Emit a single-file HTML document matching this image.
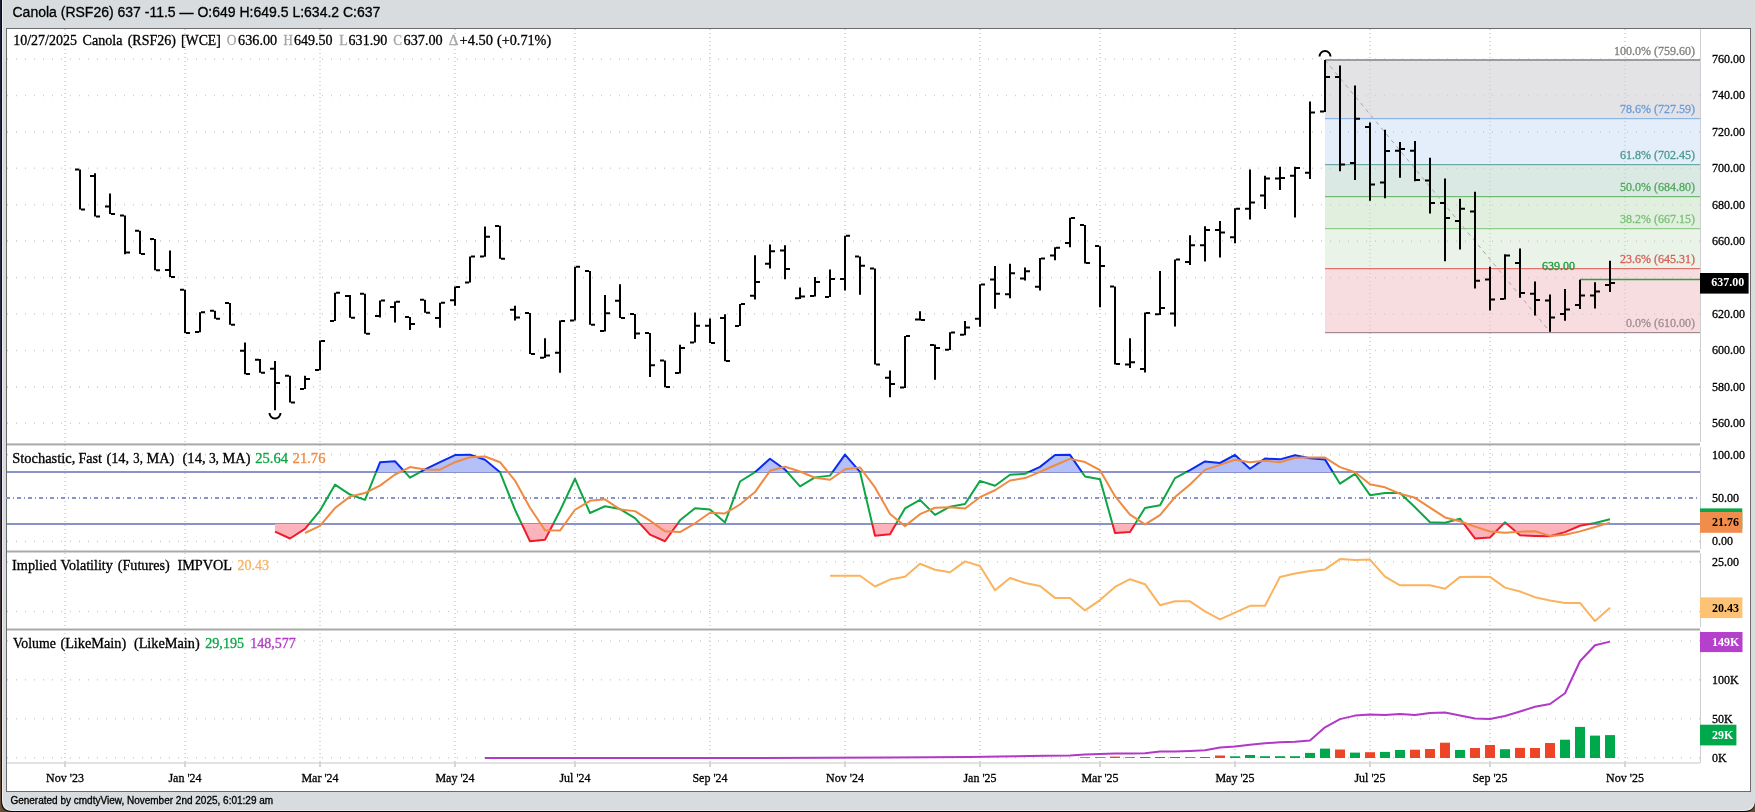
<!DOCTYPE html>
<html><head><meta charset="utf-8"><style>
html,body{margin:0;padding:0;width:1755px;height:812px;overflow:hidden;background:#5e4a33;}
svg{display:block;font-family:"Liberation Serif",serif;will-change:transform;}
</style></head><body>
<svg width="1755" height="812" viewBox="0 0 1755 812" shape-rendering="auto">
<rect x="0" y="0" width="1755" height="812" fill="#5e4a33"/>
<path d="M1 0 H1755 V801 Q1755 812 1744 812 H12 Q1 812 1 801 Z" fill="#050505"/>
<path d="M2 0 H1755 V800 Q1755 811 1744 811 H12 Q2 811 2 800 Z" fill="#eceef0"/>
<path d="M3 0 H1755 V799 Q1754 810 1743 810 H12 Q3 810 3 799 Z" fill="#d9dcdf"/>
<defs><linearGradient id="edge" x1="0" y1="0" x2="0" y2="1"><stop offset="0" stop-color="#1e2038"/><stop offset="0.48" stop-color="#34304a"/><stop offset="0.87" stop-color="#4e3e38"/><stop offset="1" stop-color="#6a5035"/></linearGradient></defs>
<rect x="0" y="0" width="1.2" height="812" fill="url(#edge)"/>
<text x="12.5" y="17" font-family="Liberation Sans" font-size="14" fill="#000" stroke="#000" stroke-width="0.3">Canola (RSF26) 637 -11.5 — O:649 H:649.5 L:634.2 C:637</text>
<rect x="6.5" y="28.5" width="1744" height="763" fill="#fff" stroke="#6b6b6b" stroke-width="1"/>
<rect x="1325" y="59.73" width="375" height="58.31" fill="#e3e3e5"/>
<rect x="1325" y="118.03" width="375" height="45.79" fill="#e3eefa"/>
<rect x="1325" y="163.83" width="375" height="32.15" fill="#dbe9e5"/>
<rect x="1325" y="195.98" width="375" height="32.15" fill="#e1efdf"/>
<rect x="1325" y="228.13" width="375" height="39.78" fill="#e9f3e7"/>
<rect x="1325" y="267.91" width="375" height="64.32" fill="#f8dde0"/>
<line x1="7" y1="423.30" x2="1700" y2="423.30" stroke="#d0d0d0" stroke-width="1.6" stroke-dasharray="1 8" stroke-dashoffset="0"/>
<line x1="7" y1="386.87" x2="1700" y2="386.87" stroke="#d0d0d0" stroke-width="1.6" stroke-dasharray="1 8" stroke-dashoffset="0"/>
<line x1="7" y1="350.44" x2="1700" y2="350.44" stroke="#d0d0d0" stroke-width="1.6" stroke-dasharray="1 8" stroke-dashoffset="0"/>
<line x1="7" y1="314.01" x2="1700" y2="314.01" stroke="#d0d0d0" stroke-width="1.6" stroke-dasharray="1 8" stroke-dashoffset="0"/>
<line x1="7" y1="277.58" x2="1700" y2="277.58" stroke="#d0d0d0" stroke-width="1.6" stroke-dasharray="1 8" stroke-dashoffset="0"/>
<line x1="7" y1="241.15" x2="1700" y2="241.15" stroke="#d0d0d0" stroke-width="1.6" stroke-dasharray="1 8" stroke-dashoffset="0"/>
<line x1="7" y1="204.72" x2="1700" y2="204.72" stroke="#d0d0d0" stroke-width="1.6" stroke-dasharray="1 8" stroke-dashoffset="0"/>
<line x1="7" y1="168.29" x2="1700" y2="168.29" stroke="#d0d0d0" stroke-width="1.6" stroke-dasharray="1 8" stroke-dashoffset="0"/>
<line x1="7" y1="131.86" x2="1700" y2="131.86" stroke="#d0d0d0" stroke-width="1.6" stroke-dasharray="1 8" stroke-dashoffset="0"/>
<line x1="7" y1="95.43" x2="1700" y2="95.43" stroke="#d0d0d0" stroke-width="1.6" stroke-dasharray="1 8" stroke-dashoffset="0"/>
<line x1="7" y1="59.00" x2="1700" y2="59.00" stroke="#d0d0d0" stroke-width="1.6" stroke-dasharray="1 8" stroke-dashoffset="0"/>
<line x1="7" y1="454.66" x2="1700" y2="454.66" stroke="#d0d0d0" stroke-width="1.6" stroke-dasharray="1 8" stroke-dashoffset="0"/>
<line x1="7" y1="541.33" x2="1700" y2="541.33" stroke="#d0d0d0" stroke-width="1.6" stroke-dasharray="1 8" stroke-dashoffset="0"/>
<line x1="7" y1="562.00" x2="1700" y2="562.00" stroke="#d0d0d0" stroke-width="1.6" stroke-dasharray="1 8" stroke-dashoffset="0"/>
<line x1="7" y1="611.50" x2="1700" y2="611.50" stroke="#d0d0d0" stroke-width="1.6" stroke-dasharray="1 8" stroke-dashoffset="0"/>
<line x1="7" y1="641.00" x2="1700" y2="641.00" stroke="#d0d0d0" stroke-width="1.6" stroke-dasharray="1 8" stroke-dashoffset="0"/>
<line x1="7" y1="679.80" x2="1700" y2="679.80" stroke="#d0d0d0" stroke-width="1.6" stroke-dasharray="1 8" stroke-dashoffset="0"/>
<line x1="7" y1="718.80" x2="1700" y2="718.80" stroke="#d0d0d0" stroke-width="1.6" stroke-dasharray="1 8" stroke-dashoffset="0"/>
<line x1="7" y1="757.80" x2="1700" y2="757.80" stroke="#d0d0d0" stroke-width="1.6" stroke-dasharray="1 8" stroke-dashoffset="0"/>
<line x1="65" y1="29" x2="65" y2="763" stroke="#d0d0d0" stroke-width="1.6" stroke-dasharray="1 3"/>
<line x1="185" y1="29" x2="185" y2="763" stroke="#d0d0d0" stroke-width="1.6" stroke-dasharray="1 3"/>
<line x1="320" y1="29" x2="320" y2="763" stroke="#d0d0d0" stroke-width="1.6" stroke-dasharray="1 3"/>
<line x1="455" y1="29" x2="455" y2="763" stroke="#d0d0d0" stroke-width="1.6" stroke-dasharray="1 3"/>
<line x1="575" y1="29" x2="575" y2="763" stroke="#d0d0d0" stroke-width="1.6" stroke-dasharray="1 3"/>
<line x1="710" y1="29" x2="710" y2="763" stroke="#d0d0d0" stroke-width="1.6" stroke-dasharray="1 3"/>
<line x1="845" y1="29" x2="845" y2="763" stroke="#d0d0d0" stroke-width="1.6" stroke-dasharray="1 3"/>
<line x1="980" y1="29" x2="980" y2="763" stroke="#d0d0d0" stroke-width="1.6" stroke-dasharray="1 3"/>
<line x1="1100" y1="29" x2="1100" y2="763" stroke="#d0d0d0" stroke-width="1.6" stroke-dasharray="1 3"/>
<line x1="1235" y1="29" x2="1235" y2="763" stroke="#d0d0d0" stroke-width="1.6" stroke-dasharray="1 3"/>
<line x1="1370" y1="29" x2="1370" y2="763" stroke="#d0d0d0" stroke-width="1.6" stroke-dasharray="1 3"/>
<line x1="1490" y1="29" x2="1490" y2="763" stroke="#d0d0d0" stroke-width="1.6" stroke-dasharray="1 3"/>
<line x1="1625" y1="29" x2="1625" y2="763" stroke="#d0d0d0" stroke-width="1.6" stroke-dasharray="1 3"/>
<rect x="1325" y="59" width="375" height="2" fill="#9c9ca0"/>
<text x="1695" y="54.73" font-family="Liberation Serif" font-size="12" fill="#808080" stroke="#808080" stroke-width="0.3" text-anchor="end">100.0% (759.60)</text>
<rect x="1325" y="118" width="375" height="1.2" fill="#8cb4e6"/>
<text x="1695" y="113.03" font-family="Liberation Serif" font-size="12" fill="#6a9ddc" stroke="#6a9ddc" stroke-width="0.3" text-anchor="end">78.6% (727.59)</text>
<rect x="1325" y="164" width="375" height="1.2" fill="#6aaaa2"/>
<text x="1695" y="158.83" font-family="Liberation Serif" font-size="12" fill="#4c9a92" stroke="#4c9a92" stroke-width="0.3" text-anchor="end">61.8% (702.45)</text>
<rect x="1325" y="196" width="375" height="1.2" fill="#72b872"/>
<text x="1695" y="190.98" font-family="Liberation Serif" font-size="12" fill="#52a85c" stroke="#52a85c" stroke-width="0.3" text-anchor="end">50.0% (684.80)</text>
<rect x="1325" y="228" width="375" height="1.2" fill="#8fcb8a"/>
<text x="1695" y="223.13" font-family="Liberation Serif" font-size="12" fill="#7cc07a" stroke="#7cc07a" stroke-width="0.3" text-anchor="end">38.2% (667.15)</text>
<rect x="1325" y="268" width="375" height="1.2" fill="#e2706a"/>
<text x="1695" y="262.91" font-family="Liberation Serif" font-size="12" fill="#d8605a" stroke="#d8605a" stroke-width="0.3" text-anchor="end">23.6% (645.31)</text>
<rect x="1325" y="332" width="375" height="1.2" fill="#a28a92"/>
<text x="1695" y="327.22" font-family="Liberation Serif" font-size="12" fill="#a08c94" stroke="#a08c94" stroke-width="0.3" text-anchor="end">0.0% (610.00)</text>
<line x1="1325" y1="60" x2="1550" y2="331.8" stroke="#a8a8a8" stroke-width="1" stroke-dasharray="4 4"/>
<line x1="1580" y1="279.4" x2="1700" y2="279.4" stroke="#2aa040" stroke-width="1.5"/>
<text x="1542" y="269.8" font-family="Liberation Serif" font-size="12" fill="#1a9a3a" stroke="#1a9a3a" stroke-width="0.3">639.00</text>
<path d="M79.0 169.5h2v40.0h-2zM75.0 168.5h4v2h-4zM81.0 208.5h4v2h-4zM94.0 173.3h2v43.2h-2zM90.0 175.0h4v2h-4zM96.0 215.5h4v2h-4zM109.0 193.6h2v20.4h-2zM105.0 205.5h4v2h-4zM111.0 213.0h4v2h-4zM124.0 215.5h2v38.8h-2zM120.0 214.5h4v2h-4zM126.0 251.6h4v2h-4zM139.0 230.7h2v23.3h-2zM135.0 229.7h4v2h-4zM141.0 253.0h4v2h-4zM154.0 239.0h2v31.3h-2zM150.0 238.0h4v2h-4zM156.0 269.3h4v2h-4zM169.0 250.5h2v26.5h-2zM165.0 269.0h4v2h-4zM171.0 276.0h4v2h-4zM184.0 289.8h2v43.3h-2zM180.0 288.8h4v2h-4zM186.0 332.0h4v2h-4zM199.0 312.2h2v20.0h-2zM195.0 331.0h4v2h-4zM201.0 311.2h4v2h-4zM214.0 310.7h2v8.1h-2zM210.0 309.7h4v2h-4zM216.0 317.8h4v2h-4zM229.0 303.0h2v21.8h-2zM225.0 302.0h4v2h-4zM231.0 323.8h4v2h-4zM244.0 342.6h2v31.7h-2zM240.0 349.7h4v2h-4zM246.0 373.0h4v2h-4zM259.0 359.0h2v13.8h-2zM255.0 358.8h4v2h-4zM261.0 371.8h4v2h-4zM274.0 361.0h2v49.2h-2zM270.0 367.8h4v2h-4zM276.0 382.1h4v2h-4zM289.0 375.7h2v26.7h-2zM285.0 374.7h4v2h-4zM291.0 401.4h4v2h-4zM304.0 375.7h2v13.3h-2zM300.0 388.0h4v2h-4zM306.0 378.1h4v2h-4zM319.0 340.5h2v29.8h-2zM315.0 369.0h4v2h-4zM321.0 340.0h4v2h-4zM334.0 292.8h2v28.1h-2zM330.0 319.9h4v2h-4zM336.0 291.8h4v2h-4zM349.0 295.0h2v22.8h-2zM345.0 294.9h4v2h-4zM351.0 316.8h4v2h-4zM364.0 293.8h2v40.0h-2zM360.0 292.8h4v2h-4zM366.0 332.8h4v2h-4zM379.0 300.5h2v16.9h-2zM375.0 315.0h4v2h-4zM381.0 299.5h4v2h-4zM394.0 301.4h2v21.2h-2zM390.0 306.0h4v2h-4zM396.0 300.7h4v2h-4zM409.0 317.0h2v13.0h-2zM405.0 316.0h4v2h-4zM411.0 323.0h4v2h-4zM424.0 299.8h2v13.0h-2zM420.0 298.8h4v2h-4zM426.0 311.8h4v2h-4zM439.0 302.8h2v25.0h-2zM435.0 317.0h4v2h-4zM441.0 301.8h4v2h-4zM454.0 286.4h2v19.3h-2zM450.0 299.2h4v2h-4zM456.0 286.0h4v2h-4zM469.0 256.4h2v26.1h-2zM465.0 281.5h4v2h-4zM471.0 255.4h4v2h-4zM484.0 226.4h2v30.4h-2zM480.0 255.4h4v2h-4zM486.0 235.7h4v2h-4zM499.0 225.8h2v33.0h-2zM495.0 225.0h4v2h-4zM501.0 257.8h4v2h-4zM514.0 305.7h2v14.8h-2zM510.0 308.7h4v2h-4zM516.0 316.6h4v2h-4zM529.0 313.0h2v41.0h-2zM525.0 312.0h4v2h-4zM531.0 353.0h4v2h-4zM544.0 338.3h2v19.7h-2zM540.0 356.8h4v2h-4zM546.0 354.6h4v2h-4zM559.0 320.5h2v52.3h-2zM555.0 351.7h4v2h-4zM561.0 319.9h4v2h-4zM574.0 266.7h2v53.8h-2zM570.0 319.5h4v2h-4zM576.0 265.7h4v2h-4zM589.0 271.0h2v53.8h-2zM585.0 270.0h4v2h-4zM591.0 323.8h4v2h-4zM604.0 295.0h2v36.4h-2zM600.0 330.0h4v2h-4zM606.0 312.3h4v2h-4zM619.0 284.3h2v33.7h-2zM615.0 299.7h4v2h-4zM621.0 317.0h4v2h-4zM634.0 314.0h2v25.0h-2zM630.0 313.0h4v2h-4zM636.0 332.4h4v2h-4zM649.0 333.1h2v43.8h-2zM645.0 332.0h4v2h-4zM651.0 364.3h4v2h-4zM664.0 360.5h2v26.7h-2zM660.0 359.5h4v2h-4zM666.0 386.0h4v2h-4zM679.0 344.7h2v28.7h-2zM675.0 372.0h4v2h-4zM681.0 347.1h4v2h-4zM694.0 312.4h2v30.2h-2zM690.0 341.6h4v2h-4zM696.0 324.7h4v2h-4zM709.0 318.4h2v24.6h-2zM705.0 324.7h4v2h-4zM711.0 342.0h4v2h-4zM724.0 314.3h2v46.9h-2zM720.0 317.1h4v2h-4zM726.0 360.0h4v2h-4zM739.0 304.0h2v21.9h-2zM735.0 325.0h4v2h-4zM741.0 303.0h4v2h-4zM754.0 255.2h2v44.3h-2zM750.0 294.7h4v2h-4zM756.0 280.9h4v2h-4zM769.0 244.5h2v24.1h-2zM765.0 262.8h4v2h-4zM771.0 250.2h4v2h-4zM784.0 245.3h2v34.0h-2zM780.0 249.5h4v2h-4zM786.0 268.0h4v2h-4zM799.0 287.4h2v11.7h-2zM795.0 297.3h4v2h-4zM801.0 295.6h4v2h-4zM814.0 277.0h2v19.6h-2zM810.0 294.9h4v2h-4zM816.0 280.9h4v2h-4zM829.0 269.5h2v27.5h-2zM825.0 296.0h4v2h-4zM831.0 278.0h4v2h-4zM844.0 235.7h2v54.8h-2zM840.0 278.0h4v2h-4zM846.0 234.7h4v2h-4zM859.0 256.5h2v38.2h-2zM855.0 255.5h4v2h-4zM861.0 264.7h4v2h-4zM874.0 268.5h2v96.0h-2zM870.0 267.5h4v2h-4zM876.0 363.5h4v2h-4zM889.0 370.4h2v26.8h-2zM885.0 376.8h4v2h-4zM891.0 382.9h4v2h-4zM904.0 335.9h2v52.1h-2zM900.0 386.6h4v2h-4zM906.0 334.9h4v2h-4zM919.0 311.3h2v9.3h-2zM915.0 318.6h4v2h-4zM921.0 319.0h4v2h-4zM934.0 344.6h2v35.1h-2zM930.0 344.0h4v2h-4zM936.0 346.9h4v2h-4zM949.0 332.2h2v17.9h-2zM945.0 348.8h4v2h-4zM951.0 331.6h4v2h-4zM964.0 321.1h2v14.2h-2zM960.0 333.8h4v2h-4zM966.0 326.6h4v2h-4zM979.0 284.2h2v42.5h-2zM975.0 317.7h4v2h-4zM981.0 283.6h4v2h-4zM994.0 266.1h2v42.7h-2zM990.0 278.5h4v2h-4zM996.0 292.7h4v2h-4zM1009.0 263.8h2v34.5h-2zM1005.0 293.3h4v2h-4zM1011.0 272.2h4v2h-4zM1024.0 267.5h2v13.0h-2zM1020.0 277.6h4v2h-4zM1026.0 270.3h4v2h-4zM1039.0 258.1h2v32.5h-2zM1035.0 285.8h4v2h-4zM1041.0 257.5h4v2h-4zM1054.0 247.2h2v13.0h-2zM1050.0 254.6h4v2h-4zM1056.0 246.7h4v2h-4zM1069.0 217.7h2v29.5h-2zM1065.0 242.0h4v2h-4zM1071.0 217.0h4v2h-4zM1084.0 225.1h2v38.3h-2zM1080.0 224.0h4v2h-4zM1086.0 262.0h4v2h-4zM1099.0 246.2h2v61.1h-2zM1095.0 245.0h4v2h-4zM1101.0 264.9h4v2h-4zM1114.0 286.4h2v78.0h-2zM1110.0 285.4h4v2h-4zM1116.0 363.0h4v2h-4zM1129.0 338.2h2v29.8h-2zM1125.0 363.4h4v2h-4zM1131.0 361.3h4v2h-4zM1144.0 312.4h2v60.2h-2zM1140.0 368.0h4v2h-4zM1146.0 312.0h4v2h-4zM1159.0 271.0h2v43.9h-2zM1155.0 313.3h4v2h-4zM1161.0 307.1h4v2h-4zM1174.0 259.4h2v67.1h-2zM1170.0 312.5h4v2h-4zM1176.0 258.6h4v2h-4zM1189.0 235.3h2v29.8h-2zM1185.0 261.0h4v2h-4zM1191.0 244.3h4v2h-4zM1204.0 226.3h2v35.2h-2zM1200.0 244.3h4v2h-4zM1206.0 228.9h4v2h-4zM1219.0 220.9h2v36.6h-2zM1215.0 228.9h4v2h-4zM1221.0 231.6h4v2h-4zM1234.0 208.2h2v35.0h-2zM1230.0 236.2h4v2h-4zM1236.0 207.7h4v2h-4zM1249.0 169.5h2v50.1h-2zM1245.0 207.7h4v2h-4zM1251.0 201.5h4v2h-4zM1264.0 175.7h2v33.2h-2zM1260.0 194.6h4v2h-4zM1266.0 177.6h4v2h-4zM1279.0 166.8h2v23.3h-2zM1275.0 177.6h4v2h-4zM1281.0 176.9h4v2h-4zM1294.0 166.8h2v50.6h-2zM1290.0 174.7h4v2h-4zM1296.0 167.0h4v2h-4zM1309.0 101.5h2v77.5h-2zM1305.0 171.8h4v2h-4zM1311.0 111.6h4v2h-4zM1324.0 60.0h2v51.9h-2zM1320.0 110.5h4v2h-4zM1326.0 76.1h4v2h-4zM1339.0 65.4h2v105.9h-2zM1335.0 76.1h4v2h-4zM1341.0 163.6h4v2h-4zM1354.0 85.5h2v94.6h-2zM1350.0 161.9h4v2h-4zM1356.0 117.8h4v2h-4zM1369.0 122.5h2v78.2h-2zM1365.0 126.0h4v2h-4zM1371.0 183.6h4v2h-4zM1384.0 129.8h2v68.5h-2zM1380.0 181.4h4v2h-4zM1386.0 149.9h4v2h-4zM1399.0 142.1h2v35.6h-2zM1395.0 149.8h4v2h-4zM1401.0 148.1h4v2h-4zM1414.0 140.9h2v40.3h-2zM1410.0 149.8h4v2h-4zM1416.0 179.0h4v2h-4zM1429.0 157.8h2v55.7h-2zM1425.0 179.5h4v2h-4zM1431.0 202.0h4v2h-4zM1444.0 178.4h2v82.9h-2zM1440.0 202.0h4v2h-4zM1446.0 217.0h4v2h-4zM1459.0 198.8h2v50.8h-2zM1455.0 220.0h4v2h-4zM1461.0 207.8h4v2h-4zM1474.0 191.7h2v96.7h-2zM1470.0 210.6h4v2h-4zM1476.0 279.7h4v2h-4zM1489.0 266.7h2v43.7h-2zM1485.0 278.5h4v2h-4zM1491.0 298.4h4v2h-4zM1504.0 254.2h2v45.2h-2zM1500.0 298.0h4v2h-4zM1506.0 254.4h4v2h-4zM1519.0 248.4h2v49.4h-2zM1515.0 262.1h4v2h-4zM1521.0 292.1h4v2h-4zM1534.0 281.6h2v33.8h-2zM1530.0 292.8h4v2h-4zM1536.0 299.0h4v2h-4zM1549.0 294.6h2v37.2h-2zM1545.0 299.6h4v2h-4zM1551.0 316.6h4v2h-4zM1564.0 289.0h2v31.7h-2zM1560.0 312.9h4v2h-4zM1566.0 308.6h4v2h-4zM1579.0 279.7h2v29.3h-2zM1575.0 303.9h4v2h-4zM1581.0 294.4h4v2h-4zM1594.0 282.3h2v26.1h-2zM1590.0 294.4h4v2h-4zM1596.0 290.4h4v2h-4zM1609.0 260.7h2v31.4h-2zM1605.0 284.0h4v2h-4zM1611.0 282.1h4v2h-4z" fill="#000"/>
<path d="M1319.5 56.5 A5.5 5.5 0 0 1 1330.5 56.5" fill="none" stroke="#000" stroke-width="2"/>
<path d="M269.5 413 A5.5 5.5 0 0 0 280.5 413" fill="none" stroke="#000" stroke-width="2"/>
<rect x="7" y="443.4" width="1693" height="2" fill="#a9a9a9"/>
<rect x="7" y="550.5" width="1693" height="2" fill="#a9a9a9"/>
<rect x="7" y="628.5" width="1693" height="2" fill="#a9a9a9"/>
<rect x="1700" y="29" width="1" height="413" fill="#cfcfd3"/>
<rect x="1700" y="447" width="1" height="102" fill="#cfcfd3"/>
<rect x="1700" y="553" width="1" height="74" fill="#cfcfd3"/>
<rect x="1700" y="631" width="1" height="132" fill="#cfcfd3"/>
<rect x="7" y="762" width="1693" height="2" fill="#e2e2e2"/>
<rect x="64" y="762" width="2" height="5" fill="#d6d6d6"/>
<text x="65" y="782" font-family="Liberation Serif" font-size="12" fill="#000" stroke="#000" stroke-width="0.3" text-anchor="middle">Nov '23</text>
<rect x="184" y="762" width="2" height="5" fill="#d6d6d6"/>
<text x="185" y="782" font-family="Liberation Serif" font-size="12" fill="#000" stroke="#000" stroke-width="0.3" text-anchor="middle">Jan '24</text>
<rect x="319" y="762" width="2" height="5" fill="#d6d6d6"/>
<text x="320" y="782" font-family="Liberation Serif" font-size="12" fill="#000" stroke="#000" stroke-width="0.3" text-anchor="middle">Mar '24</text>
<rect x="454" y="762" width="2" height="5" fill="#d6d6d6"/>
<text x="455" y="782" font-family="Liberation Serif" font-size="12" fill="#000" stroke="#000" stroke-width="0.3" text-anchor="middle">May '24</text>
<rect x="574" y="762" width="2" height="5" fill="#d6d6d6"/>
<text x="575" y="782" font-family="Liberation Serif" font-size="12" fill="#000" stroke="#000" stroke-width="0.3" text-anchor="middle">Jul '24</text>
<rect x="709" y="762" width="2" height="5" fill="#d6d6d6"/>
<text x="710" y="782" font-family="Liberation Serif" font-size="12" fill="#000" stroke="#000" stroke-width="0.3" text-anchor="middle">Sep '24</text>
<rect x="844" y="762" width="2" height="5" fill="#d6d6d6"/>
<text x="845" y="782" font-family="Liberation Serif" font-size="12" fill="#000" stroke="#000" stroke-width="0.3" text-anchor="middle">Nov '24</text>
<rect x="979" y="762" width="2" height="5" fill="#d6d6d6"/>
<text x="980" y="782" font-family="Liberation Serif" font-size="12" fill="#000" stroke="#000" stroke-width="0.3" text-anchor="middle">Jan '25</text>
<rect x="1099" y="762" width="2" height="5" fill="#d6d6d6"/>
<text x="1100" y="782" font-family="Liberation Serif" font-size="12" fill="#000" stroke="#000" stroke-width="0.3" text-anchor="middle">Mar '25</text>
<rect x="1234" y="762" width="2" height="5" fill="#d6d6d6"/>
<text x="1235" y="782" font-family="Liberation Serif" font-size="12" fill="#000" stroke="#000" stroke-width="0.3" text-anchor="middle">May '25</text>
<rect x="1369" y="762" width="2" height="5" fill="#d6d6d6"/>
<text x="1370" y="782" font-family="Liberation Serif" font-size="12" fill="#000" stroke="#000" stroke-width="0.3" text-anchor="middle">Jul '25</text>
<rect x="1489" y="762" width="2" height="5" fill="#d6d6d6"/>
<text x="1490" y="782" font-family="Liberation Serif" font-size="12" fill="#000" stroke="#000" stroke-width="0.3" text-anchor="middle">Sep '25</text>
<rect x="1624" y="762" width="2" height="5" fill="#d6d6d6"/>
<text x="1625" y="782" font-family="Liberation Serif" font-size="12" fill="#000" stroke="#000" stroke-width="0.3" text-anchor="middle">Nov '25</text>
<line x1="7" y1="472.00" x2="1700" y2="472.00" stroke="#8a92cc" stroke-width="2"/>
<line x1="7" y1="524.00" x2="1700" y2="524.00" stroke="#8a92cc" stroke-width="2"/>
<line x1="6" y1="498" x2="1700" y2="498" stroke="#8a92cc" stroke-width="2" stroke-dasharray="4 3 1 3"/>
<defs><clipPath id="cu"><rect x="0" y="0" width="1755" height="472.00"/></clipPath><clipPath id="cl"><rect x="0" y="524.00" width="1755" height="300"/></clipPath><clipPath id="cm"><rect x="0" y="472.00" width="1755" height="52.00"/></clipPath></defs>
<polygon points="275.0,472.00 275.0,531.57 290.0,538.48 305.0,528.89 320.0,510.53 335.0,484.65 350.0,494.55 365.0,499.87 380.0,462.37 395.0,461.23 410.0,477.70 425.0,469.43 440.0,462.05 455.0,455.08 470.0,454.66 485.0,459.73 500.0,472.19 515.0,509.72 530.0,541.33 545.0,539.76 560.0,510.73 575.0,478.78 590.0,513.03 605.0,506.25 620.0,509.02 635.0,518.10 650.0,534.68 665.0,541.22 680.0,520.33 695.0,508.31 710.0,509.54 725.0,522.49 740.0,481.49 755.0,472.19 770.0,458.73 785.0,469.54 800.0,486.31 815.0,477.38 830.0,475.62 845.0,454.66 860.0,471.82 875.0,535.73 890.0,534.19 905.0,508.43 920.0,499.90 935.0,514.87 950.0,506.66 965.0,503.98 980.0,480.90 995.0,485.79 1010.0,474.79 1025.0,473.77 1040.0,466.90 1055.0,454.95 1070.0,454.81 1085.0,476.53 1100.0,479.19 1115.0,532.93 1130.0,532.02 1145.0,507.98 1160.0,505.24 1175.0,478.11 1190.0,470.11 1205.0,461.49 1220.0,463.00 1235.0,454.93 1250.0,468.74 1265.0,458.55 1280.0,459.34 1295.0,455.17 1310.0,458.21 1325.0,459.40 1340.0,483.66 1355.0,473.79 1370.0,495.18 1385.0,493.07 1400.0,492.99 1415.0,507.32 1430.0,522.31 1445.0,522.69 1460.0,518.73 1475.0,538.41 1490.0,537.52 1505.0,522.29 1520.0,535.34 1535.0,535.99 1550.0,536.33 1565.0,532.14 1580.0,525.71 1595.0,522.99 1610.0,519.22 1610.0,472.00" fill="#b5c0f8" clip-path="url(#cu)"/>
<polygon points="275.0,472.00 275.0,531.57 290.0,538.48 305.0,528.89 320.0,510.53 335.0,484.65 350.0,494.55 365.0,499.87 380.0,462.37 395.0,461.23 410.0,477.70 425.0,469.43 440.0,462.05 455.0,455.08 470.0,454.66 485.0,459.73 500.0,472.19 515.0,509.72 530.0,541.33 545.0,539.76 560.0,510.73 575.0,478.78 590.0,513.03 605.0,506.25 620.0,509.02 635.0,518.10 650.0,534.68 665.0,541.22 680.0,520.33 695.0,508.31 710.0,509.54 725.0,522.49 740.0,481.49 755.0,472.19 770.0,458.73 785.0,469.54 800.0,486.31 815.0,477.38 830.0,475.62 845.0,454.66 860.0,471.82 875.0,535.73 890.0,534.19 905.0,508.43 920.0,499.90 935.0,514.87 950.0,506.66 965.0,503.98 980.0,480.90 995.0,485.79 1010.0,474.79 1025.0,473.77 1040.0,466.90 1055.0,454.95 1070.0,454.81 1085.0,476.53 1100.0,479.19 1115.0,532.93 1130.0,532.02 1145.0,507.98 1160.0,505.24 1175.0,478.11 1190.0,470.11 1205.0,461.49 1220.0,463.00 1235.0,454.93 1250.0,468.74 1265.0,458.55 1280.0,459.34 1295.0,455.17 1310.0,458.21 1325.0,459.40 1340.0,483.66 1355.0,473.79 1370.0,495.18 1385.0,493.07 1400.0,492.99 1415.0,507.32 1430.0,522.31 1445.0,522.69 1460.0,518.73 1475.0,538.41 1490.0,537.52 1505.0,522.29 1520.0,535.34 1535.0,535.99 1550.0,536.33 1565.0,532.14 1580.0,525.71 1595.0,522.99 1610.0,519.22 1610.0,472.00" fill="#fdb3bb" clip-path="url(#cl)"/>
<polyline points="275.0,531.57 290.0,538.48 305.0,528.89 320.0,510.53 335.0,484.65 350.0,494.55 365.0,499.87 380.0,462.37 395.0,461.23 410.0,477.70 425.0,469.43 440.0,462.05 455.0,455.08 470.0,454.66 485.0,459.73 500.0,472.19 515.0,509.72 530.0,541.33 545.0,539.76 560.0,510.73 575.0,478.78 590.0,513.03 605.0,506.25 620.0,509.02 635.0,518.10 650.0,534.68 665.0,541.22 680.0,520.33 695.0,508.31 710.0,509.54 725.0,522.49 740.0,481.49 755.0,472.19 770.0,458.73 785.0,469.54 800.0,486.31 815.0,477.38 830.0,475.62 845.0,454.66 860.0,471.82 875.0,535.73 890.0,534.19 905.0,508.43 920.0,499.90 935.0,514.87 950.0,506.66 965.0,503.98 980.0,480.90 995.0,485.79 1010.0,474.79 1025.0,473.77 1040.0,466.90 1055.0,454.95 1070.0,454.81 1085.0,476.53 1100.0,479.19 1115.0,532.93 1130.0,532.02 1145.0,507.98 1160.0,505.24 1175.0,478.11 1190.0,470.11 1205.0,461.49 1220.0,463.00 1235.0,454.93 1250.0,468.74 1265.0,458.55 1280.0,459.34 1295.0,455.17 1310.0,458.21 1325.0,459.40 1340.0,483.66 1355.0,473.79 1370.0,495.18 1385.0,493.07 1400.0,492.99 1415.0,507.32 1430.0,522.31 1445.0,522.69 1460.0,518.73 1475.0,538.41 1490.0,537.52 1505.0,522.29 1520.0,535.34 1535.0,535.99 1550.0,536.33 1565.0,532.14 1580.0,525.71 1595.0,522.99 1610.0,519.22" fill="none" stroke="#0a2cf0" stroke-width="2" stroke-linejoin="round" clip-path="url(#cu)"/>
<polyline points="275.0,531.57 290.0,538.48 305.0,528.89 320.0,510.53 335.0,484.65 350.0,494.55 365.0,499.87 380.0,462.37 395.0,461.23 410.0,477.70 425.0,469.43 440.0,462.05 455.0,455.08 470.0,454.66 485.0,459.73 500.0,472.19 515.0,509.72 530.0,541.33 545.0,539.76 560.0,510.73 575.0,478.78 590.0,513.03 605.0,506.25 620.0,509.02 635.0,518.10 650.0,534.68 665.0,541.22 680.0,520.33 695.0,508.31 710.0,509.54 725.0,522.49 740.0,481.49 755.0,472.19 770.0,458.73 785.0,469.54 800.0,486.31 815.0,477.38 830.0,475.62 845.0,454.66 860.0,471.82 875.0,535.73 890.0,534.19 905.0,508.43 920.0,499.90 935.0,514.87 950.0,506.66 965.0,503.98 980.0,480.90 995.0,485.79 1010.0,474.79 1025.0,473.77 1040.0,466.90 1055.0,454.95 1070.0,454.81 1085.0,476.53 1100.0,479.19 1115.0,532.93 1130.0,532.02 1145.0,507.98 1160.0,505.24 1175.0,478.11 1190.0,470.11 1205.0,461.49 1220.0,463.00 1235.0,454.93 1250.0,468.74 1265.0,458.55 1280.0,459.34 1295.0,455.17 1310.0,458.21 1325.0,459.40 1340.0,483.66 1355.0,473.79 1370.0,495.18 1385.0,493.07 1400.0,492.99 1415.0,507.32 1430.0,522.31 1445.0,522.69 1460.0,518.73 1475.0,538.41 1490.0,537.52 1505.0,522.29 1520.0,535.34 1535.0,535.99 1550.0,536.33 1565.0,532.14 1580.0,525.71 1595.0,522.99 1610.0,519.22" fill="none" stroke="#ee1c2a" stroke-width="2" stroke-linejoin="round" clip-path="url(#cl)"/>
<polyline points="275.0,531.57 290.0,538.48 305.0,528.89 320.0,510.53 335.0,484.65 350.0,494.55 365.0,499.87 380.0,462.37 395.0,461.23 410.0,477.70 425.0,469.43 440.0,462.05 455.0,455.08 470.0,454.66 485.0,459.73 500.0,472.19 515.0,509.72 530.0,541.33 545.0,539.76 560.0,510.73 575.0,478.78 590.0,513.03 605.0,506.25 620.0,509.02 635.0,518.10 650.0,534.68 665.0,541.22 680.0,520.33 695.0,508.31 710.0,509.54 725.0,522.49 740.0,481.49 755.0,472.19 770.0,458.73 785.0,469.54 800.0,486.31 815.0,477.38 830.0,475.62 845.0,454.66 860.0,471.82 875.0,535.73 890.0,534.19 905.0,508.43 920.0,499.90 935.0,514.87 950.0,506.66 965.0,503.98 980.0,480.90 995.0,485.79 1010.0,474.79 1025.0,473.77 1040.0,466.90 1055.0,454.95 1070.0,454.81 1085.0,476.53 1100.0,479.19 1115.0,532.93 1130.0,532.02 1145.0,507.98 1160.0,505.24 1175.0,478.11 1190.0,470.11 1205.0,461.49 1220.0,463.00 1235.0,454.93 1250.0,468.74 1265.0,458.55 1280.0,459.34 1295.0,455.17 1310.0,458.21 1325.0,459.40 1340.0,483.66 1355.0,473.79 1370.0,495.18 1385.0,493.07 1400.0,492.99 1415.0,507.32 1430.0,522.31 1445.0,522.69 1460.0,518.73 1475.0,538.41 1490.0,537.52 1505.0,522.29 1520.0,535.34 1535.0,535.99 1550.0,536.33 1565.0,532.14 1580.0,525.71 1595.0,522.99 1610.0,519.22" fill="none" stroke="#0ea544" stroke-width="2" stroke-linejoin="round" clip-path="url(#cm)"/>
<polyline points="305.0,532.98 320.0,525.96 335.0,508.02 350.0,496.58 365.0,493.02 380.0,485.60 395.0,474.49 410.0,467.10 425.0,469.45 440.0,469.72 455.0,462.19 470.0,457.26 485.0,456.49 500.0,462.20 515.0,480.55 530.0,507.75 545.0,530.27 560.0,530.61 575.0,509.75 590.0,500.85 605.0,499.35 620.0,509.43 635.0,511.12 650.0,520.60 665.0,531.33 680.0,532.08 695.0,523.29 710.0,512.73 725.0,513.44 740.0,504.51 755.0,492.06 770.0,470.81 785.0,466.82 800.0,471.53 815.0,477.74 830.0,479.77 845.0,469.22 860.0,467.37 875.0,487.41 890.0,513.92 905.0,526.12 920.0,514.18 935.0,507.74 950.0,507.15 965.0,508.51 980.0,497.18 995.0,490.22 1010.0,480.49 1025.0,478.11 1040.0,471.82 1055.0,465.21 1070.0,458.89 1085.0,462.10 1100.0,470.18 1115.0,496.22 1130.0,514.71 1145.0,524.31 1160.0,515.08 1175.0,497.11 1190.0,484.48 1205.0,469.90 1220.0,464.86 1235.0,459.81 1250.0,462.22 1265.0,460.74 1280.0,462.21 1295.0,457.68 1310.0,457.57 1325.0,457.59 1340.0,467.09 1355.0,472.28 1370.0,484.21 1385.0,487.35 1400.0,493.75 1415.0,497.79 1430.0,507.54 1445.0,517.44 1460.0,521.24 1475.0,526.61 1490.0,531.55 1505.0,532.74 1520.0,531.72 1535.0,531.21 1550.0,535.89 1565.0,534.82 1580.0,531.39 1595.0,526.95 1610.0,522.64" fill="none" stroke="#f08a42" stroke-width="2" stroke-linejoin="round"/>
<polyline points="830.0,575.80 845.0,575.80 860.0,575.80 875.0,586.50 890.0,579.60 905.0,576.70 920.0,563.70 935.0,569.80 950.0,572.30 965.0,561.40 980.0,566.00 995.0,590.30 1010.0,578.00 1025.0,583.00 1040.0,586.00 1055.0,597.90 1070.0,597.90 1085.0,610.40 1100.0,600.10 1115.0,586.90 1130.0,579.20 1145.0,584.20 1160.0,605.20 1175.0,601.30 1190.0,601.30 1205.0,611.30 1220.0,619.30 1235.0,612.70 1250.0,605.80 1265.0,605.80 1280.0,576.90 1295.0,573.50 1310.0,571.00 1325.0,569.40 1340.0,559.10 1355.0,560.00 1370.0,559.60 1385.0,576.70 1400.0,585.30 1415.0,585.30 1430.0,585.30 1445.0,588.70 1460.0,576.90 1475.0,576.70 1490.0,576.90 1505.0,587.60 1520.0,591.50 1535.0,597.20 1550.0,600.60 1565.0,602.90 1580.0,602.90 1595.0,621.10 1610.0,607.80" fill="none" stroke="#fbb35e" stroke-width="2" stroke-linejoin="round"/>
<rect x="1080" y="757.2" width="10" height="0.8" fill="#ee4428"/>
<rect x="1095" y="757.2" width="10" height="0.8" fill="#ee4428"/>
<rect x="1110" y="756.6" width="10" height="1.4" fill="#ee4428"/>
<rect x="1125" y="757.2" width="10" height="0.8" fill="#00a84c"/>
<rect x="1140" y="757.0" width="10" height="1.0" fill="#00a84c"/>
<rect x="1155" y="757.0" width="10" height="1.0" fill="#00a84c"/>
<rect x="1170" y="757.0" width="10" height="1.0" fill="#00a84c"/>
<rect x="1185" y="757.2" width="10" height="0.8" fill="#00a84c"/>
<rect x="1200" y="757.0" width="10" height="1.0" fill="#00a84c"/>
<rect x="1215" y="755.5" width="10" height="2.5" fill="#ee4428"/>
<rect x="1230" y="756.3" width="10" height="1.7" fill="#00a84c"/>
<rect x="1245" y="755.0" width="10" height="3.0" fill="#00a84c"/>
<rect x="1260" y="756.2" width="10" height="1.8" fill="#00a84c"/>
<rect x="1275" y="756.2" width="10" height="1.8" fill="#00a84c"/>
<rect x="1290" y="756.2" width="10" height="1.8" fill="#00a84c"/>
<rect x="1305" y="752.9" width="10" height="5.1" fill="#00a84c"/>
<rect x="1320" y="748.6" width="10" height="9.4" fill="#00a84c"/>
<rect x="1335" y="749.5" width="10" height="8.5" fill="#ee4428"/>
<rect x="1350" y="752.6" width="10" height="5.4" fill="#00a84c"/>
<rect x="1365" y="752.2" width="10" height="5.8" fill="#ee4428"/>
<rect x="1380" y="751.9" width="10" height="6.1" fill="#00a84c"/>
<rect x="1395" y="750.0" width="10" height="8.0" fill="#00a84c"/>
<rect x="1410" y="749.7" width="10" height="8.3" fill="#ee4428"/>
<rect x="1425" y="749.0" width="10" height="9.0" fill="#ee4428"/>
<rect x="1440" y="742.7" width="10" height="15.3" fill="#ee4428"/>
<rect x="1455" y="750.0" width="10" height="8.0" fill="#00a84c"/>
<rect x="1470" y="748.0" width="10" height="10.0" fill="#ee4428"/>
<rect x="1485" y="745.0" width="10" height="13.0" fill="#ee4428"/>
<rect x="1500" y="749.2" width="10" height="8.8" fill="#00a84c"/>
<rect x="1515" y="747.9" width="10" height="10.1" fill="#ee4428"/>
<rect x="1530" y="748.0" width="10" height="10.0" fill="#ee4428"/>
<rect x="1545" y="743.0" width="10" height="15.0" fill="#ee4428"/>
<rect x="1560" y="739.7" width="10" height="18.3" fill="#00a84c"/>
<rect x="1575" y="726.9" width="10" height="31.1" fill="#00a84c"/>
<rect x="1590" y="735.6" width="10" height="22.4" fill="#00a84c"/>
<rect x="1605" y="735.1" width="10" height="22.9" fill="#00a84c"/>
<polyline points="485.0,757.90 760.0,757.90 890.0,757.50 970.0,756.90 1000.0,756.60 1045.0,755.80 1070.0,755.50 1085.0,754.60 1100.0,754.00 1115.0,753.50 1130.0,753.60 1145.0,753.20 1160.0,751.50 1175.0,751.50 1190.0,751.00 1205.0,750.20 1220.0,747.60 1235.0,746.40 1250.0,744.70 1265.0,743.30 1280.0,742.30 1295.0,741.80 1310.0,740.60 1325.0,727.30 1340.0,719.10 1355.0,715.60 1370.0,714.50 1385.0,715.10 1400.0,714.00 1415.0,715.10 1430.0,713.10 1445.0,712.60 1460.0,715.60 1475.0,718.40 1490.0,719.00 1505.0,716.00 1520.0,711.50 1535.0,706.80 1550.0,704.00 1565.0,693.20 1580.0,661.30 1595.0,645.30 1610.0,641.60" fill="none" stroke="#b238c8" stroke-width="2" stroke-linejoin="round"/>
<text x="1712" y="427.30" font-family="Liberation Serif" font-size="12" fill="#000" stroke="#000" stroke-width="0.3">560.00</text>
<text x="1712" y="390.87" font-family="Liberation Serif" font-size="12" fill="#000" stroke="#000" stroke-width="0.3">580.00</text>
<text x="1712" y="354.44" font-family="Liberation Serif" font-size="12" fill="#000" stroke="#000" stroke-width="0.3">600.00</text>
<text x="1712" y="318.01" font-family="Liberation Serif" font-size="12" fill="#000" stroke="#000" stroke-width="0.3">620.00</text>
<text x="1712" y="245.15" font-family="Liberation Serif" font-size="12" fill="#000" stroke="#000" stroke-width="0.3">660.00</text>
<text x="1712" y="208.72" font-family="Liberation Serif" font-size="12" fill="#000" stroke="#000" stroke-width="0.3">680.00</text>
<text x="1712" y="172.29" font-family="Liberation Serif" font-size="12" fill="#000" stroke="#000" stroke-width="0.3">700.00</text>
<text x="1712" y="135.86" font-family="Liberation Serif" font-size="12" fill="#000" stroke="#000" stroke-width="0.3">720.00</text>
<text x="1712" y="99.43" font-family="Liberation Serif" font-size="12" fill="#000" stroke="#000" stroke-width="0.3">740.00</text>
<text x="1712" y="63.00" font-family="Liberation Serif" font-size="12" fill="#000" stroke="#000" stroke-width="0.3">760.00</text>
<rect x="1700" y="273" width="48.6" height="20.6" fill="#000"/>
<text x="1711.3" y="285.9" font-family="Liberation Serif" font-size="12" font-weight="bold" fill="#fff">637.00</text>
<text x="1712" y="458.66" font-family="Liberation Serif" font-size="12" fill="#000" stroke="#000" stroke-width="0.3">100.00</text>
<text x="1712" y="502" font-family="Liberation Serif" font-size="12" fill="#000" stroke="#000" stroke-width="0.3">50.00</text>
<text x="1712" y="545.33" font-family="Liberation Serif" font-size="12" fill="#000" stroke="#000" stroke-width="0.3">0.00</text>
<rect x="1700" y="508.4" width="42.3" height="20.6" fill="#08a848"/>
<rect x="1700" y="512" width="42.3" height="20.8" fill="#f08c4c"/>
<text x="1712" y="526.4" font-family="Liberation Serif" font-size="12" font-weight="bold" fill="#000">21.76</text>
<text x="1712" y="566" font-family="Liberation Serif" font-size="12" fill="#000" stroke="#000" stroke-width="0.3">25.00</text>
<rect x="1700" y="597.4" width="42.4" height="20.7" fill="#fdc274"/>
<text x="1712" y="611.8" font-family="Liberation Serif" font-size="12" font-weight="bold" fill="#000">20.43</text>
<rect x="1700" y="632" width="42.5" height="20.1" fill="#b440cc"/>
<text x="1712" y="646" font-family="Liberation Serif" font-size="12" font-weight="bold" fill="#fff">149K</text>
<text x="1712" y="683.8" font-family="Liberation Serif" font-size="12" fill="#000" stroke="#000" stroke-width="0.3">100K</text>
<text x="1712" y="722.8" font-family="Liberation Serif" font-size="12" fill="#000" stroke="#000" stroke-width="0.3">50K</text>
<rect x="1700" y="724.7" width="36.4" height="20.7" fill="#00a84c"/>
<text x="1712" y="739" font-family="Liberation Serif" font-size="12" font-weight="bold" fill="#fff">29K</text>
<text x="1712" y="761.8" font-family="Liberation Serif" font-size="12" fill="#000" stroke="#000" stroke-width="0.3">0K</text>
<text x="13.20" y="45" font-family="Liberation Serif" font-size="14" fill="#000" stroke="#000" stroke-width="0.3" textLength="63.78" lengthAdjust="spacingAndGlyphs">10/27/2025</text>
<text x="82.60" y="45" font-family="Liberation Serif" font-size="14" fill="#000" stroke="#000" stroke-width="0.3" textLength="39.85" lengthAdjust="spacingAndGlyphs">Canola</text>
<text x="127.70" y="45" font-family="Liberation Serif" font-size="14" fill="#000" stroke="#000" stroke-width="0.3" textLength="48.23" lengthAdjust="spacingAndGlyphs">(RSF26)</text>
<text x="181.00" y="45" font-family="Liberation Serif" font-size="14" fill="#000" stroke="#000" stroke-width="0.3" textLength="39.93" lengthAdjust="spacingAndGlyphs">[WCE]</text>
<text x="226.70" y="45" font-family="Liberation Serif" font-size="14" fill="#a6a6a6" stroke="#a6a6a6" stroke-width="0.3" textLength="9.81" lengthAdjust="spacingAndGlyphs">O</text>
<text x="238.10" y="45" font-family="Liberation Serif" font-size="14" fill="#000" stroke="#000" stroke-width="0.3" textLength="39.10" lengthAdjust="spacingAndGlyphs">636.00</text>
<text x="283.50" y="45" font-family="Liberation Serif" font-size="14" fill="#a6a6a6" stroke="#a6a6a6" stroke-width="0.3" textLength="9.31" lengthAdjust="spacingAndGlyphs">H</text>
<text x="294.00" y="45" font-family="Liberation Serif" font-size="14" fill="#000" stroke="#000" stroke-width="0.3" textLength="38.60" lengthAdjust="spacingAndGlyphs">649.50</text>
<text x="339.30" y="45" font-family="Liberation Serif" font-size="14" fill="#a6a6a6" stroke="#a6a6a6" stroke-width="0.3" textLength="8.45" lengthAdjust="spacingAndGlyphs">L</text>
<text x="348.60" y="45" font-family="Liberation Serif" font-size="14" fill="#000" stroke="#000" stroke-width="0.3" textLength="38.60" lengthAdjust="spacingAndGlyphs">631.90</text>
<text x="393.30" y="45" font-family="Liberation Serif" font-size="14" fill="#a6a6a6" stroke="#a6a6a6" stroke-width="0.3" textLength="8.74" lengthAdjust="spacingAndGlyphs">C</text>
<text x="403.60" y="45" font-family="Liberation Serif" font-size="14" fill="#000" stroke="#000" stroke-width="0.3" textLength="39.10" lengthAdjust="spacingAndGlyphs">637.00</text>
<text x="448.80" y="45" font-family="Liberation Serif" font-size="14" fill="#a6a6a6" stroke="#a6a6a6" stroke-width="0.3" textLength="9.60" lengthAdjust="spacingAndGlyphs">Δ</text>
<text x="459.50" y="45" font-family="Liberation Serif" font-size="14" fill="#000" stroke="#000" stroke-width="0.3" textLength="33.50" lengthAdjust="spacingAndGlyphs">+4.50</text>
<text x="497.00" y="45" font-family="Liberation Serif" font-size="14" fill="#000" stroke="#000" stroke-width="0.3" textLength="54.18" lengthAdjust="spacingAndGlyphs">(+0.71%)</text>
<text x="12.20" y="462.5" font-family="Liberation Serif" font-size="14" fill="#000" stroke="#000" stroke-width="0.3" textLength="63.15" lengthAdjust="spacingAndGlyphs">Stochastic,</text>
<text x="78.40" y="462.5" font-family="Liberation Serif" font-size="14" fill="#000" stroke="#000" stroke-width="0.3" textLength="23.64" lengthAdjust="spacingAndGlyphs">Fast</text>
<text x="106.40" y="462.5" font-family="Liberation Serif" font-size="14" fill="#000" stroke="#000" stroke-width="0.3" textLength="22.76" lengthAdjust="spacingAndGlyphs">(14,</text>
<text x="133.30" y="462.5" font-family="Liberation Serif" font-size="14" fill="#000" stroke="#000" stroke-width="0.3" textLength="9.50" lengthAdjust="spacingAndGlyphs">3,</text>
<text x="146.50" y="462.5" font-family="Liberation Serif" font-size="14" fill="#000" stroke="#000" stroke-width="0.3" textLength="27.82" lengthAdjust="spacingAndGlyphs">MA)</text>
<text x="182.50" y="462.5" font-family="Liberation Serif" font-size="14" fill="#000" stroke="#000" stroke-width="0.3" textLength="23.16" lengthAdjust="spacingAndGlyphs">(14,</text>
<text x="208.90" y="462.5" font-family="Liberation Serif" font-size="14" fill="#000" stroke="#000" stroke-width="0.3" textLength="10.10" lengthAdjust="spacingAndGlyphs">3,</text>
<text x="222.60" y="462.5" font-family="Liberation Serif" font-size="14" fill="#000" stroke="#000" stroke-width="0.3" textLength="27.82" lengthAdjust="spacingAndGlyphs">MA)</text>
<text x="255.30" y="462.5" font-family="Liberation Serif" font-size="14" fill="#0ea544" stroke="#0ea544" stroke-width="0.3" textLength="32.80" lengthAdjust="spacingAndGlyphs">25.64</text>
<text x="292.60" y="462.5" font-family="Liberation Serif" font-size="14" fill="#f08a42" stroke="#f08a42" stroke-width="0.3" textLength="32.90" lengthAdjust="spacingAndGlyphs">21.76</text>
<text x="12.05" y="569.5" font-family="Liberation Serif" font-size="14" fill="#000" stroke="#000" stroke-width="0.3" textLength="44.49" lengthAdjust="spacingAndGlyphs">Implied</text>
<text x="60.60" y="569.5" font-family="Liberation Serif" font-size="14" fill="#000" stroke="#000" stroke-width="0.3" textLength="52.25" lengthAdjust="spacingAndGlyphs">Volatility</text>
<text x="117.70" y="569.5" font-family="Liberation Serif" font-size="14" fill="#000" stroke="#000" stroke-width="0.3" textLength="52.03" lengthAdjust="spacingAndGlyphs">(Futures)</text>
<text x="177.40" y="569.5" font-family="Liberation Serif" font-size="14" fill="#000" stroke="#000" stroke-width="0.3" textLength="54.67" lengthAdjust="spacingAndGlyphs">IMPVOL</text>
<text x="237.60" y="569.5" font-family="Liberation Serif" font-size="14" fill="#fbb35e" stroke="#fbb35e" stroke-width="0.3" textLength="31.50" lengthAdjust="spacingAndGlyphs">20.43</text>
<text x="13.10" y="647.8" font-family="Liberation Serif" font-size="14" fill="#000" stroke="#000" stroke-width="0.3" textLength="42.70" lengthAdjust="spacingAndGlyphs">Volume</text>
<text x="60.40" y="647.8" font-family="Liberation Serif" font-size="14" fill="#000" stroke="#000" stroke-width="0.3" textLength="65.83" lengthAdjust="spacingAndGlyphs">(LikeMain)</text>
<text x="133.90" y="647.8" font-family="Liberation Serif" font-size="14" fill="#000" stroke="#000" stroke-width="0.3" textLength="65.83" lengthAdjust="spacingAndGlyphs">(LikeMain)</text>
<text x="205.20" y="647.8" font-family="Liberation Serif" font-size="14" fill="#0ea544" stroke="#0ea544" stroke-width="0.3" textLength="39.00" lengthAdjust="spacingAndGlyphs">29,195</text>
<text x="250.20" y="647.8" font-family="Liberation Serif" font-size="14" fill="#b238c8" stroke="#b238c8" stroke-width="0.3" textLength="45.60" lengthAdjust="spacingAndGlyphs">148,577</text>
<text x="10.4" y="804" font-family="Liberation Sans" font-size="10" fill="#000" stroke="#000" stroke-width="0.3">Generated by cmdtyView, November 2nd 2025, 6:01:29 am</text>
</svg>
</body></html>
